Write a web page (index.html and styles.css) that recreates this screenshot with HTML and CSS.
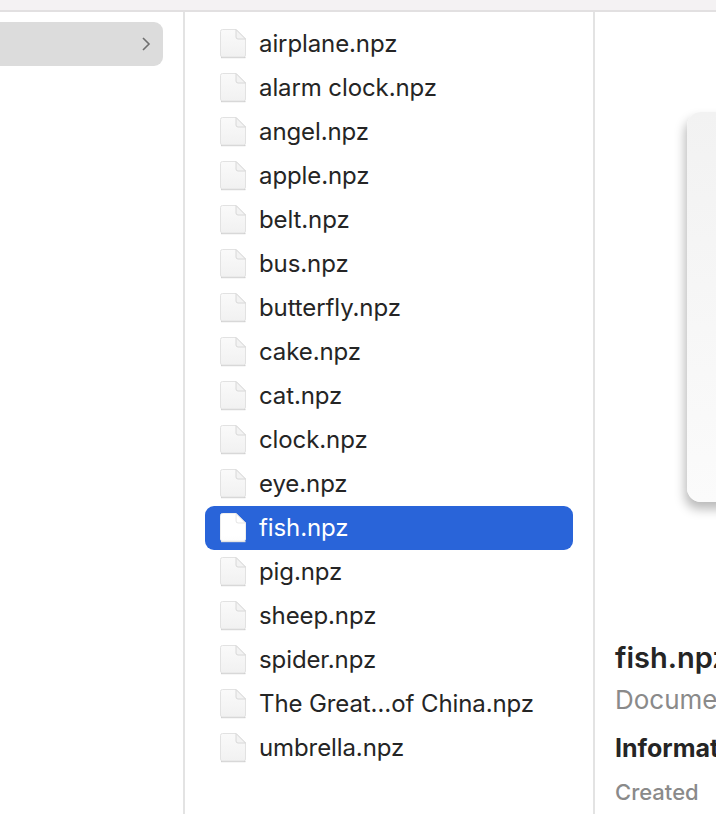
FILE: index.html
```html
<!DOCTYPE html>
<html lang="en">
<head>
    <meta charset="UTF-8">
    <title>Finder</title>
    <link rel="stylesheet" href="styles.css">
</head>
<body>
    <svg class="defs" width="0" height="0">
        <defs>
            <linearGradient id="pageFill" x1="0" y1="0" x2="0" y2="1">
                <stop offset="0" stop-color="#fafafa"/>
                <stop offset="1" stop-color="#f1f1f1"/>
            </linearGradient>
            <symbol id="doc" viewBox="0 0 28 32">
                <path d="M1 29.5h24.5" fill="none" stroke="#cfcfcf" stroke-width="1.4"/>
                <path d="M2.5 1.5H16L25.5 11V27a2 2 0 0 1-2 2H2.5a2 2 0 0 1-2-2V3.5a2 2 0 0 1 2-2z" fill="url(#pageFill)" stroke="#e2e2e2"/>
                <path d="M16 1.5V9a2 2 0 0 0 2 2h7.5z" fill="#f3f3f3" stroke="#d8d8d8"/>
            </symbol>
        </defs>
    </svg>
    <div class="topbar"></div>
    <div class="browser">
        <div class="col-parent">
            <div class="parent-row">
                <svg class="chevron" width="10" height="16" viewBox="0 0 10 16"><path d="M2 2l6 6-6 6" fill="none" stroke="#6f6f6f" stroke-width="1.6"/></svg>
            </div>
        </div>
        <div class="col-files">
            <div class="file"><svg class="icon"><use href="#doc"/></svg><span>airplane.npz</span></div>
            <div class="file"><svg class="icon"><use href="#doc"/></svg><span>alarm clock.npz</span></div>
            <div class="file"><svg class="icon"><use href="#doc"/></svg><span>angel.npz</span></div>
            <div class="file"><svg class="icon"><use href="#doc"/></svg><span>apple.npz</span></div>
            <div class="file"><svg class="icon"><use href="#doc"/></svg><span>belt.npz</span></div>
            <div class="file"><svg class="icon"><use href="#doc"/></svg><span>bus.npz</span></div>
            <div class="file"><svg class="icon"><use href="#doc"/></svg><span>butterfly.npz</span></div>
            <div class="file"><svg class="icon"><use href="#doc"/></svg><span>cake.npz</span></div>
            <div class="file"><svg class="icon"><use href="#doc"/></svg><span>cat.npz</span></div>
            <div class="file"><svg class="icon"><use href="#doc"/></svg><span>clock.npz</span></div>
            <div class="file"><svg class="icon"><use href="#doc"/></svg><span>eye.npz</span></div>
            <div class="file selected"><svg class="icon"><use href="#doc"/></svg><span>fish.npz</span></div>
            <div class="file"><svg class="icon"><use href="#doc"/></svg><span>pig.npz</span></div>
            <div class="file"><svg class="icon"><use href="#doc"/></svg><span>sheep.npz</span></div>
            <div class="file"><svg class="icon"><use href="#doc"/></svg><span>spider.npz</span></div>
            <div class="file"><svg class="icon"><use href="#doc"/></svg><span>The Great…of China.npz</span></div>
            <div class="file"><svg class="icon"><use href="#doc"/></svg><span>umbrella.npz</span></div>
        </div>
        <div class="col-preview">
            <div class="preview-box"><div class="preview-page"></div></div>
            <div class="preview-name">fish.npz</div>
            <div class="preview-kind">Document</div>
            <div class="preview-head">Information</div>
            <div class="preview-label">Created</div>
        </div>
    </div>
</body>
</html>
```

FILE: styles.css
```css
html, body {
    height: 100%;
}
body {
    margin: 0;
    overflow: hidden;
    background: #fff;
    color: #252525;
    font-family: 'Inter', 'Liberation Sans', sans-serif;
    font-size: 24px;
}
.defs {
    display: block;
    height: 0;
}
.topbar {
    height: 10px;
    background: #f4f2f3;
    border-bottom: 2px solid #e2e0e1;
}
.browser {
    display: flex;
    height: 802px;
}
.col-parent {
    width: 183px;
    flex: none;
    padding-top: 10px;
    border-right: 2px solid #e3e3e3;
}
.parent-row {
    width: 163px;
    height: 44px;
    display: flex;
    align-items: center;
    justify-content: flex-end;
    background: #dcdcdc;
    border-radius: 0 9px 9px 0;
}
.chevron {
    margin-right: 12px;
}
.col-files {
    width: 368px;
    flex: none;
    padding: 10px 20px 0;
    border-right: 2px solid #e3e3e3;
}
.file {
    height: 44px;
    display: flex;
    align-items: center;
    gap: 11px;
    padding-left: 15px;
    border-radius: 9px;
    white-space: nowrap;
    letter-spacing: -0.1px;
}
.file span {
    padding-bottom: 2px;
}
.file.selected {
    background: #2964d9;
    color: #fff;
}
.file.selected .icon {
    filter: brightness(1.05);
}
.icon {
    width: 28px;
    height: 32px;
    flex: none;
}
.col-preview {
    flex: 1;
    min-width: 0;
    overflow: hidden;
    padding-left: 20px;
    white-space: nowrap;
}
.preview-box {
    height: 560px;
    padding: 100px 0 0 72px;
    box-sizing: border-box;
}
.preview-page {
    width: 200px;
    height: 390px;
    background: linear-gradient(#f2f2f2, #fbfbfb);
    border-radius: 14px 0 0 14px;
    box-shadow: -2px 7px 11px rgba(0, 0, 0, 0.28);
}
.preview-name {
    margin-top: 68px;
    font-size: 29px;
    font-weight: 600;
    line-height: 36px;
}
.preview-kind {
    margin-top: 9px;
    color: #8a8a8a;
    font-size: 26px;
    line-height: 30px;
}
.preview-head {
    margin-top: 18px;
    font-size: 25px;
    font-weight: 700;
    line-height: 30px;
}
.preview-label {
    margin-top: 14px;
    color: #8a8a8a;
    font-size: 22px;
    font-weight: 500;
    line-height: 30px;
}
```
